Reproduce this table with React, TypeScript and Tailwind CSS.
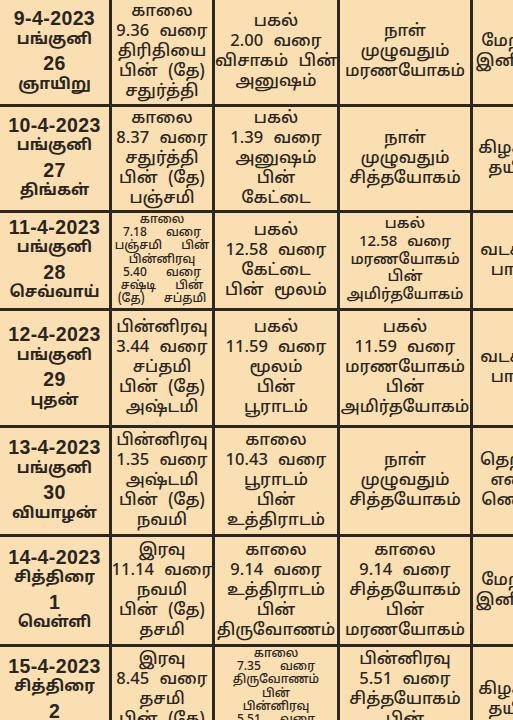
import React from 'react';

type Cell = { lines: string[]; small?: boolean; tight?: boolean };
type Row = { date: string[]; cells: Cell[] };

const rows: Row[] = [
  {
    date: ['9-4-2023', 'பங்குனி', '26', 'ஞாயிறு'],
    cells: [
      { lines: ['காலை', '9.36 வரை', 'திரிதியை', 'பின் (தே)', 'சதுர்த்தி'] },
      { lines: ['பகல்', '2.00 வரை', 'விசாகம் பின்', 'அனுஷம்'] },
      { lines: ['நாள்', 'முழுவதும்', 'மரணயோகம்'] },
      { lines: ['மேற்கு', 'இனிப்பு'] },
    ],
  },
  {
    date: ['10-4-2023', 'பங்குனி', '27', 'திங்கள்'],
    cells: [
      { lines: ['காலை', '8.37 வரை', 'சதுர்த்தி', 'பின் (தே)', 'பஞ்சமி'] },
      { lines: ['பகல்', '1.39 வரை', 'அனுஷம்', 'பின்', 'கேட்டை'] },
      { lines: ['நாள்', 'முழுவதும்', 'சித்தயோகம்'] },
      { lines: ['கிழக்கு', 'தயிர்'] },
    ],
  },
  {
    date: ['11-4-2023', 'பங்குனி', '28', 'செவ்வாய்'],
    cells: [
      {
        lines: ['காலை', '7.18 வரை', 'பஞ்சமி பின்', 'பின்னிரவு', '5.40 வரை', 'சஷ்டி பின்', '(தே) சப்தமி'],
        small: true,
      },
      { lines: ['பகல்', '12.58 வரை', 'கேட்டை', 'பின் மூலம்'] },
      { lines: ['பகல்', '12.58 வரை', 'மரணயோகம்', 'பின்', 'அமிர்தயோகம்'], tight: true },
      { lines: ['வடக்கு', 'பால்'] },
    ],
  },
  {
    date: ['12-4-2023', 'பங்குனி', '29', 'புதன்'],
    cells: [
      { lines: ['பின்னிரவு', '3.44 வரை', 'சப்தமி', 'பின் (தே)', 'அஷ்டமி'] },
      { lines: ['பகல்', '11.59 வரை', 'மூலம்', 'பின்', 'பூராடம்'] },
      { lines: ['பகல்', '11.59 வரை', 'மரணயோகம்', 'பின்', 'அமிர்தயோகம்'] },
      { lines: ['வடக்கு', 'பால்'] },
    ],
  },
  {
    date: ['13-4-2023', 'பங்குனி', '30', 'வியாழன்'],
    cells: [
      { lines: ['பின்னிரவு', '1.35 வரை', 'அஷ்டமி', 'பின் (தே)', 'நவமி'] },
      { lines: ['காலை', '10.43 வரை', 'பூராடம்', 'பின்', 'உத்திராடம்'] },
      { lines: ['நாள்', 'முழுவதும்', 'சித்தயோகம்'] },
      { lines: ['தெற்கு', 'எண்', 'ணெய்'] },
    ],
  },
  {
    date: ['14-4-2023', 'சித்திரை', '1', 'வெள்ளி'],
    cells: [
      { lines: ['இரவு', '11.14 வரை', 'நவமி', 'பின் (தே)', 'தசமி'] },
      { lines: ['காலை', '9.14 வரை', 'உத்திராடம்', 'பின்', 'திருவோணம்'] },
      { lines: ['காலை', '9.14 வரை', 'சித்தயோகம்', 'பின்', 'மரணயோகம்'] },
      { lines: ['மேற்கு', 'இனிப்பு'] },
    ],
  },
  {
    date: ['15-4-2023', 'சித்திரை', '2', 'சனி'],
    cells: [
      { lines: ['இரவு', '8.45 வரை', 'தசமி', 'பின் (தே)', 'ஏகாதசி'] },
      {
        lines: ['காலை', '7.35 வரை', 'திருவோணம்', 'பின்', 'பின்னிரவு', '5.51 வரை', 'அவிட்டம்'],
        small: true,
      },
      { lines: ['பின்னிரவு', '5.51 வரை', 'சித்தயோகம்', 'பின்', 'மரணயோகம்'] },
      { lines: ['கிழக்கு', 'தயிர்'] },
    ],
  },
];

const font = "font-['Noto_Sans_Tamil','Lohit_Tamil','Liberation_Sans',sans-serif]";

// digits-only lines in the date column are drawn larger than the Tamil month/day names
const isLatin = (s: string) => /^[0-9-]+$/.test(s);

export default function App() {
  return (
    <div className={`h-[720px] w-[513px] overflow-hidden bg-[#f9dfb1] text-[#2a2520] ${font}`}>
      <div className="grid w-max grid-cols-[109px_100px_122px_130px_76px] grid-rows-[104px_103px_95px_114px_106px_107px_105px] gap-[3px] bg-[#2b2823]">
        {rows.map((row) => (
          <React.Fragment key={row.date[0]}>
            <div className="flex min-h-0 flex-col items-center justify-center overflow-hidden bg-[#f9dfb1] font-bold">
              {row.date.map((l) =>
                isLatin(l) ? (
                  <div key={l} className="text-[19.5px] leading-[22.5px] tracking-[0.4px] font-['Liberation_Sans',sans-serif]">
                    {l}
                  </div>
                ) : (
                  <div key={l} className="text-[15.5px] leading-[22.5px]">
                    {l}
                  </div>
                )
              )}
            </div>
            {row.cells.map((c, i) => (
              <div
                key={i}
                className={`flex min-h-0 flex-col items-center overflow-hidden whitespace-nowrap bg-[#f9dfb1] font-medium ${
                  c.small
                    ? 'justify-start pt-[1px] text-[12px] leading-[13.2px] [word-spacing:16px]'
                    : c.tight
                      ? 'justify-center text-[15px] leading-[17.8px] [word-spacing:6px]'
                      : 'justify-center text-[16.5px] leading-[20px] [word-spacing:6px]'
                }`}
              >
                {c.lines.map((l, j) => (
                  <div key={j}>{l}</div>
                ))}
              </div>
            ))}
          </React.Fragment>
        ))}
      </div>
    </div>
  );
}
